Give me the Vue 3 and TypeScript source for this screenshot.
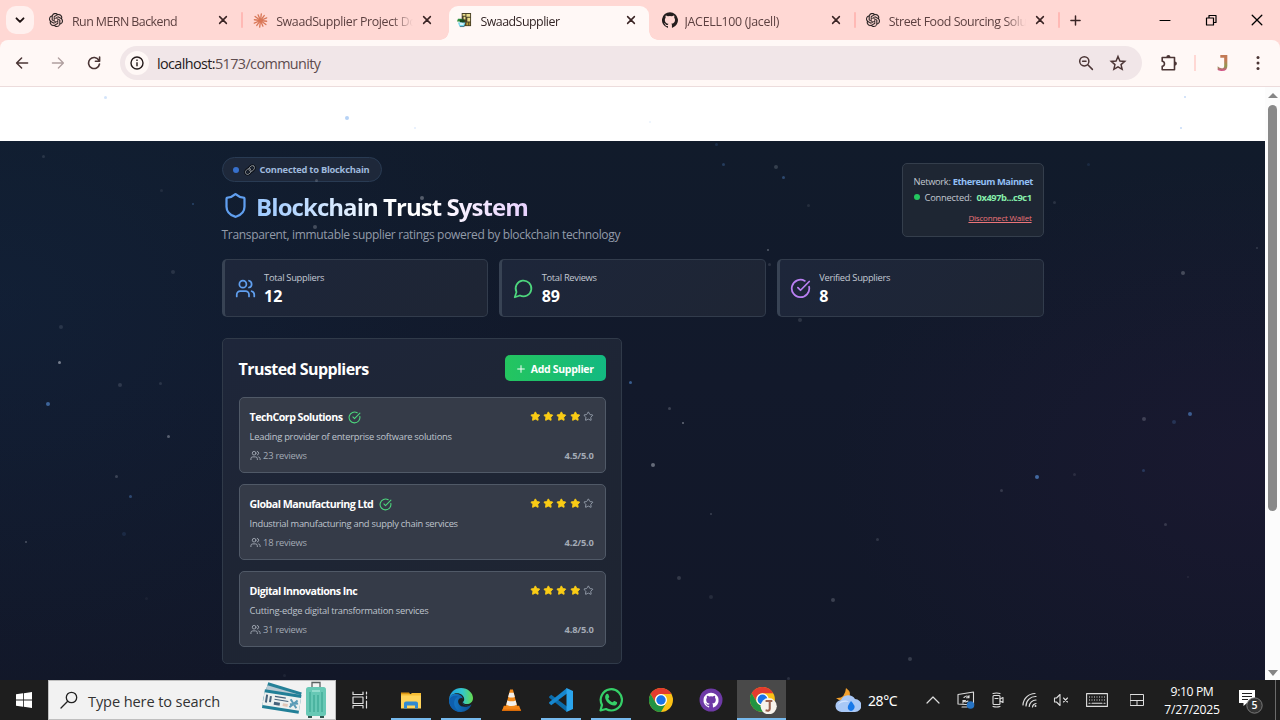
<script setup lang="ts">
import { h, type FunctionalComponent } from 'vue'

const openai =
  '<path fill="#241e1e" stroke="#241e1e" stroke-width=".3" d="M22.2819 9.8211a5.9847 5.9847 0 0 0-.5157-4.9108 6.0462 6.0462 0 0 0-6.5098-2.9A6.0651 6.0651 0 0 0 4.9807 4.1818a5.9847 5.9847 0 0 0-3.9977 2.9 6.0462 6.0462 0 0 0 .7427 7.0966 5.98 5.98 0 0 0 .511 4.9107 6.051 6.051 0 0 0 6.5146 2.9001A5.9847 5.9847 0 0 0 13.2599 24a6.0557 6.0557 0 0 0 5.7718-4.2058 5.9894 5.9894 0 0 0 3.9977-2.9001 6.0557 6.0557 0 0 0-.7475-7.0729zm-9.022 12.6081a4.4755 4.4755 0 0 1-2.8764-1.0408l.1419-.0804 4.7783-2.7582a.7948.7948 0 0 0 .3927-.6813v-6.7369l2.02 1.1686a.071.071 0 0 1 .038.052v5.5826a4.504 4.504 0 0 1-4.4945 4.4944zm-9.6607-4.1254a4.4708 4.4708 0 0 1-.5346-3.0137l.142.0852 4.783 2.7582a.7712.7712 0 0 0 .7806 0l5.8428-3.3685v2.3324a.0804.0804 0 0 1-.0332.0615L9.74 19.9502a4.4992 4.4992 0 0 1-6.1408-1.6464zM2.3408 7.8956a4.485 4.485 0 0 1 2.3655-1.9728V11.6a.7664.7664 0 0 0 .3879.6765l5.8144 3.3543-2.0201 1.1685a.0757.0757 0 0 1-.071 0l-4.8303-2.7865A4.504 4.504 0 0 1 2.3408 7.872zm16.5963 3.8558L13.1038 8.364 15.1192 7.2a.0757.0757 0 0 1 .071 0l4.8303 2.7913a4.4944 4.4944 0 0 1-.6765 8.1042v-5.6772a.79.79 0 0 0-.407-.667zm2.0107-3.0231l-.142-.0852-4.7735-2.7818a.7759.7759 0 0 0-.7854 0L9.409 9.2297V6.8974a.0662.0662 0 0 1 .0284-.0615l4.8303-2.7866a4.4992 4.4992 0 0 1 6.6802 4.66zM8.3065 12.863l-2.02-1.1638a.0804.0804 0 0 1-.038-.0567V6.0742a4.4992 4.4992 0 0 1 7.3757-3.4537l-.142.0805L8.704 5.459a.7948.7948 0 0 0-.3927.6813zm1.0976-2.3654l2.602-1.4998 2.6069 1.4998v2.9994l-2.5974 1.4997-2.6067-1.4997Z"/>'
const octocat =
  'M12 .3a12 12 0 0 0-3.8 23.4c.6.1.8-.3.8-.6v-2c-3.3.7-4-1.6-4-1.6-.6-1.4-1.4-1.8-1.4-1.8-1-.7.1-.7.1-.7 1.2.1 1.8 1.2 1.8 1.2 1 1.8 2.8 1.3 3.5 1 .1-.8.4-1.3.7-1.6-2.6-.3-5.4-1.3-5.4-6 0-1.2.4-2.3 1.2-3.1-.1-.4-.5-1.6.1-3.2 0 0 1-.3 3.3 1.2a11.500 11.500 0 0 1 6 0C17.200 5 18.200 5.300 18.200 5.300c.6 1.600.2 2.800.1 3.200.8.8 1.200 1.900 1.200 3.200 0 4.600-2.800 5.600-5.500 5.900.5.4.9 1 .9 2.200v3.300c0 .3.1.7.8.6A12 12 0 0 0 12 .3'
const chrome =
  '<circle cx="12" cy="12" r="12" fill="#fbc116"/><path fill="#e33b2e" d="M1.600 6A12 12 0 0 1 22.400 6H12a6 6 0 0 0-5.200 9z"/><path fill="#229342" d="M1.600 6A12 12 0 0 0 12 24l5.200-9a6 6 0 0 1-10.400 0z"/><circle cx="12" cy="12" r="6" fill="#fff"/><circle cx="12" cy="12" r="4.700" fill="#1a73e8"/>'

const rays = Array.from({ length: 12 }, (_, i) => {
  const a = (i * Math.PI) / 6 + 0.12
  const r = i % 2 ? 7.2 : 6.6
  return `<path d="M8 8 ${(8 + Math.cos(a) * r).toFixed(2)} ${(8 + Math.sin(a) * r).toFixed(2)}"/>`
}).join('')

type Art = { box: string; body: string; line?: number }

const art: Record<string, Art> = {
  openai: { box: '0 0 24 24', body: openai },
  claude: { box: '0 0 16 16', body: `<g stroke="#d97757" stroke-width="1.400" stroke-linecap="round">${rays}</g>` },
  swaad: {
    box: '0 0 16 16',
    body: '<path fill="#4a4228" d="M5 0h10v14H5z"/><path fill="#e9dc8b" d="M6 1h3v2H6zM10 1h4v3h-4zM7 4h2v3H7zM11 5h3v4h-3z"/><path fill="#b99a35" d="M10 10h2v3h-2zM13 10h1v3h-1z"/><path fill="#2f8f3d" d="M1 6h4l2 3H0z"/><path fill="#17491f" d="M3 7h5v3H3z"/><path fill="#70d6ea" d="M1 10h8l-1.500 4h-5z"/><path fill="#fff" d="M3 11h4v1.500H3z"/><path fill="#3e7183" d="M3 14h5v1H3z"/>',
  },
  github: { box: '0 0 24 24', body: `<path fill="#241e1e" d="${octocat}"/>` },
  close: { box: '0 0 10 10', line: 1.5, body: '<path d="m1.600 1.600 6.800 6.800m0-6.800L1.600 8.400"/>' },
  chevron: { box: '0 0 10 10', line: 1.9, body: '<path d="m1.500 3.300 3.500 3.500 3.500-3.500"/>' },
  add: { box: '0 0 12 12', line: 1.6, body: '<path d="M6 1v10M1 6h10"/>' },
  minimise: { box: '0 0 12 12', line: 1.1, body: '<path d="M1 6.500h10"/>' },
  restore: { box: '0 0 12 12', line: 1.2, body: '<path d="M1.500 4h7v7h-7zM4 4V1.500h7V8.500H8.500"/>' },
  exit: { box: '0 0 12 12', line: 1.3, body: '<path d="m1.200 1.200 9.600 9.600m0-9.600-9.600 9.600"/>' },
  back: { box: '0 0 14 14', line: 1.5, body: '<path d="M12.600 7H1.800M6.600 2 1.600 7l5 5"/>' },
  forward: { box: '0 0 14 14', line: 1.3, body: '<path d="M1.400 7h10.800M7.400 2l5 5-5 5"/>' },
  reload: { box: '0 0 14 14', line: 1.6, body: '<path d="M11.800 4.200A5.500 5.500 0 1 0 12.500 8M12.600 1v4.200H8.400"/>' },
  info: { box: '0 0 16 16', line: 1.4, body: '<circle cx="8" cy="8" r="6"/><path stroke-linecap="butt" d="M8 7.200v4M8 4.600V6"/>' },
  zoomOut: { box: '0 0 16 16', line: 1.5, body: '<circle cx="6.300" cy="6.300" r="4.600"/><path d="m9.800 9.800 4.600 4.600M4.600 6.300h3.400"/>' },
  bookmark: { box: '0 0 16 16', line: 1.3, body: '<path stroke-linejoin="miter" d="m8 2.200 1.700 4 4.300.4-3.300 2.800 1 4.200L8 11.400l-3.700 2.200 1-4.200L2 6.600l4.300-.4z"/>' },
  puzzle: { box: '0 0 18 18', line: 1.6, body: '<path d="M2.200 3.500h12.300v12.300H2.200v-3.600c3-.4 3-4.600 0-5z"/><path fill="currentColor" stroke="none" d="M6.300 3.200a2.100 2.100 0 0 1 4.200 0zM14.800 7.500a2.100 2.100 0 0 1 0 4.200z"/>' },
  dots: { box: '0 0 4 16', body: '<circle cx="2" cy="2.500" r="1.500" fill="currentColor"/><circle cx="2" cy="8" r="1.500" fill="currentColor"/><circle cx="2" cy="13.500" r="1.500" fill="currentColor"/>' },
  link: { box: '0 0 12 12', line: 1, body: '<g stroke="#0a0d14" stroke-width="2.400"><ellipse cx="4.300" cy="7.500" rx="3.300" ry="2.400" transform="rotate(-48 4.300 7.500)"/><ellipse cx="7.700" cy="4.500" rx="3.300" ry="2.400" transform="rotate(-48 7.700 4.500)"/></g><g stroke="#858b92" stroke-width=".9"><ellipse cx="4.300" cy="7.500" rx="3.300" ry="2.400" transform="rotate(-48 4.300 7.500)"/><ellipse cx="7.700" cy="4.500" rx="3.300" ry="2.400" transform="rotate(-48 7.700 4.500)"/></g>' },
  shield: { box: '0 0 24 24', line: 2, body: '<path d="M20 13c0 5-3.500 7.500-7.660 8.950a1 1 0 0 1-.67-.01C7.500 20.500 4 18 4 13V6a1 1 0 0 1 1-1c2 0 4.500-1.200 6.240-2.720a1.170 1.170 0 0 1 1.520 0C14.510 3.810 17 5 19 5a1 1 0 0 1 1 1z"/>' },
  users: { box: '0 0 24 24', line: 2, body: '<path d="M16 21v-2a4 4 0 0 0-4-4H6a4 4 0 0 0-4 4v2"/><circle cx="9" cy="7" r="4"/><path d="M22 21v-2a4 4 0 0 0-3-3.870M16 3.130a4 4 0 0 1 0 7.750"/>' },
  message: { box: '0 0 24 24', line: 2, body: '<path d="M7.900 20A9 9 0 1 0 4 16.100L2 22Z"/>' },
  check: { box: '0 0 24 24', line: 2, body: '<path d="M21.801 10A10 10 0 1 1 17 3.335"/><path d="m9 11 3 3L22 4"/>' },
  plus: { box: '0 0 24 24', line: 2.3, body: '<path d="M4 12h16M12 4v16"/>' },
  star: { box: '0 0 24 24', line: 2, body: '<path d="M11.525 2.295a.53.53 0 0 1 .95 0l2.310 4.679a2.120 2.120 0 0 0 1.595 1.160l5.166.756a.53.53 0 0 1 .294.904l-3.736 3.638a2.120 2.120 0 0 0-.611 1.878l.882 5.140a.53.53 0 0 1-.771.560l-4.618-2.428a2.120 2.120 0 0 0-1.973 0L6.396 21.010a.53.53 0 0 1-.770-.560l.881-5.139a2.120 2.120 0 0 0-.611-1.879L2.160 9.795a.53.53 0 0 1 .294-.906l5.165-.755a2.120 2.120 0 0 0 1.597-1.160z"/>' },
  windows: { box: '0 0 16 16', body: '<path fill="#fff" d="M0 2.300 7 1.300v6.300H0zM7.800 1.200 16 0v7.600H7.800zM0 8.400h7v6.300l-7-1zM7.800 8.400H16V16l-8.200-1.200z"/>' },
  search: { box: '0 0 18 18', line: 1.3, body: '<circle cx="11.500" cy="6.500" r="5.200"/><path d="M7.700 10.300 1 17"/>' },
  travel: {
    box: '0 0 66 38',
    body: '<g transform="rotate(17 20 18)"><path fill="#258198" d="M2 6h35v19H2z"/><path fill="#b9c9d2" d="M2 9h35v14H2z"/></g><g transform="rotate(9 20 22)"><path fill="#217f97" d="M1 11h37v19H1z"/><path fill="#edf0ef" d="M1 14h37v13H1z"/><path fill="#46627b" d="M3 16h2v8H3zM7 17h2v6H7zM12 16h11v1.200H12zM12 19h14v1H12zM12 22h6v3h-6z"/><path fill="#e2c7b8" d="M21 22h5v3h-5z"/><path stroke="#5b9bb6" stroke-width="2" d="m28 17 7 8m0-8-7 8m0-3 8-2"/></g><path fill="none" stroke="#596061" stroke-width="1.300" d="M50 7V1.500h8V7"/><rect x="44" y="6" width="20" height="29" rx="2.500" fill="#67c8b5"/><path stroke="#3ba793" stroke-width="1.200" d="M48 11v20M52 14v17M56 14v17M60 11v20"/><path fill="#92dccd" d="M50 9h8v2h-8z"/><path fill="#31564f" d="M46 35h4v2h-4zM58 35h4v2h-4z"/>',
  },
  taskView: { box: '0 0 18 18', line: 1.2, body: '<path d="M2 1v2.500h10V1M2 6h10v6.500H2zM2 17v-2.500h10V17M15.500 1v2M15.500 5v2.500M15.500 10v7"/>' },
  explorer: { box: '0 0 22 18', body: '<path fill="#d99411" d="M1 1h8l2 2.500H1z"/><path fill="#ffd45b" d="M1 3h20v14H1z"/><path fill="#f6bd34" d="M1 3h9l2-1.500h9V4H1z"/><path fill="#318ad2" d="M4 17v-5a2 2 0 0 1 2-2h10a2 2 0 0 1 2 2v5h-3v-3H7v3z"/>' },
  edge: {
    box: '0 0 24 24',
    body: '<defs><linearGradient id="edge-top" x1="0" x2="1"><stop stop-color="#1d9fe1"/><stop offset=".55" stop-color="#32c5cf"/><stop offset="1" stop-color="#66dc4e"/></linearGradient><linearGradient id="edge-low" x1="0" x2="1"><stop stop-color="#1780d2"/><stop offset="1" stop-color="#0a4d91"/></linearGradient></defs><path fill="url(#edge-low)" d="M0 12C0 7 4 5.500 8 6c5 .6 6.500 4 5.500 6-1 1.800 1 5.600 5 5.600 2 0 3.300-.7 4-1C20.500 21.500 16.500 24 12 24 5 24 0 18.600 0 12"/><path fill="#0e5fae" d="M9 8.500c-3.500 2-4.500 5.500-3.500 9 1 3.300 3.800 6.500 7.500 6.500-5 .4-12.500-3-12.900-11C.2 9 5 6.500 9 8.500"/><path fill="url(#edge-top)" d="M.1 11C.7 4.500 5.800 0 12 0c7 0 12 5 12 10 0 4-3 6-6 6-2.500 0-4-1-4-1.800 0-.6 1.200-1 1.200-3C15.200 8 12 5.300 8 5.300 4 5.300 1 7.500.1 11"/><path fill="#1e1e1e" d="M9.300 12.200c.7-2 3-2.700 4.400-1.800.8 1.200.3 2.700-.2 3.500-.3 2.200 2.400 4 5.400 3.500 1-.1 2.400-.8 3.100-.7-2.500 2.200-10 3.500-12.100-.7-.8-1.400-.9-2.800-.6-3.800"/>',
  },
  vlc: { box: '0 0 22 24', body: '<path fill="#f58314" d="M3 18h16l2 5.500H1z"/><path fill="#d96b08" d="M1 22h20v1.500H1z"/><path fill="#f28a1c" d="M9.500 1h3L17 19q-6 3-12 0z"/><path fill="#f3f1ed" d="m8.700 4.500-1.200 4.300q3.500 1.300 7 0l-1.200-4.300zM6.600 12.500 5.500 17q5.500 2.600 11 0l-1.100-4.500q-4.400 1.800-8.800 0"/>' },
  vscode: { box: '0 0 24 24', body: '<path fill="#0b6cab" d="M0 8.800 2.300 6.700 18 18.500V24L.2 9.800z"/><path fill="#1687cf" d="M0 15.200 2.300 17.300 18 5.500V0L.2 14.200z"/><path fill="#2ba5ed" d="m17.500 0 6.500 2.900v18.200L17.500 24z"/>' },
  whatsapp: { box: '0 0 24 24', body: '<path fill="none" stroke="#35cf68" stroke-width="2.200" stroke-linejoin="round" d="m1.500 22.500 1.500-5.600A10.600 10.600 0 1 1 7 21z"/><path fill="#35cf68" d="M7.200 6.300c1-.8 1.900-.5 2.200.2l.8 1.900c.4 1-.7 1.500-.9 2 .5 1.600 2.700 3.400 4.300 3.900.7-.4 1.100-1.600 1.900-1.300l2.200 1.100c1 .6.2 2.200-.6 2.800-2 1.600-5.600.2-7.800-1.800C7 13.100 4.800 9 7.200 6.300"/>' },
  chrome: { box: '0 0 24 24', body: chrome },
  desktop: { box: '0 0 24 24', body: `<circle cx="12" cy="12" r="11.500" fill="#6e3aa6"/><g transform="translate(4.500 4.500) scale(.63)"><path fill="#fff" d="${octocat}"/></g>` },
  profile: { box: '0 0 26 26', body: `${chrome}<circle cx="18" cy="18.500" r="7.800" fill="#f7f3ed"/><path fill="none" stroke="#9b6250" stroke-width="2" d="M15 13.500h6.500M19 13.500v7.500q0 2.500-4 1.500"/>` },
  weather: { box: '0 0 26 26', body: '<path fill="#f2a12e" d="M11 1q7 5 2 11-5 5-12-1 9 1 10-10"/><path fill="#a9c8f6" d="M7 25a6 6 0 0 1-1-12 8 8 0 0 1 14-1 6.500 6.500 0 0 1 0 13z"/><path fill="#d3e4ff" d="M3 18a7 7 0 0 1 11-3q-7-1-11 3"/><path fill="#1878e8" d="M16 14q5 5 3 8-3 4-6 0-1-3 3-8"/>' },
  up: { box: '0 0 14 14', line: 1.2, body: '<path d="m1 10 6-6 6 6"/>' },
  screen: { box: '0 0 18 18', line: 1.1, body: '<path d="M1 3.500 16.500 1v13L1 13zM5 16h5M7 6.500q3-3 5 0M12 4.500v2.300H9.500M11 10q-3 2-5-.5M6 12V9.500h2.500"/><circle cx="13.500" cy="14" r="3.800" fill="#2774c4" stroke="none"/>' },
  camera: { box: '0 0 16 16', line: 1.1, body: '<rect x="3" y="3.500" width="7" height="9" rx="1"/><path d="m10 7 3-1.500v5L10 9M3 1.500q3.500-1 7 0M3 14.500q3.500 1 7 0M5 6.500h3"/>' },
  wifi: { box: '0 0 16 16', line: 1.2, body: '<path d="M1 13A12 12 0 0 1 13 1.500M4 14A9.500 9.500 0 0 1 14 4.500M7.200 14.500A7 7 0 0 1 14 8M10.500 15a4 4 0 0 1 3.500-3.500"/><circle cx="13.500" cy="14" r="1" fill="currentColor" stroke="none"/>' },
  mute: { box: '0 0 16 16', line: 1.1, body: '<path d="M1.500 6h2L7 2.500v11L3.500 10h-2zM10.500 6l4 4m0-4-4 4"/>' },
  keyboard: { box: '0 0 22 14', line: 1.1, body: '<path d="M.6.600h20.800v12.800H.6z"/><path stroke-dasharray="1 1.500" stroke-linecap="butt" d="M3 4h16M3 7h16"/><path d="M6 10.300h10M3 10.300h1M18 10.300h1"/>' },
  touchpad: { box: '0 0 14 12', line: 1, body: '<path d="M.5.500h13v11H.5zM.5 6.500h13M7 6.500v5"/>' },
  notes: { box: '0 0 26 26', body: '<path fill="#fff" d="M1 2h16v13H9l-3.500 3v-3H1z"/><path stroke="#222" d="M4 5.500h10M4 8.500h10M4 11.500h6"/><circle cx="16.500" cy="17.500" r="7.700" fill="#343434" stroke="#8b8b8b" stroke-width=".8"/>' },
}

const Glyph: FunctionalComponent<{ name: string }> = (props) => {
  const item = art[props.name]
  const line = item.line
    ? { stroke: 'currentColor', 'stroke-width': item.line, 'stroke-linejoin': 'round', 'stroke-linecap': 'round' }
    : {}
  return h('svg', { viewBox: item.box, fill: 'none', 'aria-hidden': 'true', innerHTML: item.body, ...line })
}
Glyph.props = ['name']

const tabs = [
  { icon: 'openai', title: 'Run MERN Backend', fit: 'fit-a' },
  { icon: 'claude', title: 'SwaadSupplier Project Do', fit: 'fit-b' },
  { icon: 'swaad', title: 'SwaadSupplier', fit: 'fit-c', active: true },
  { icon: 'github', title: 'JACELL100 (Jacell)', fit: 'fit-d' },
  { icon: 'openai', title: 'Street Food Sourcing Solu', fit: 'fit-e' },
]

const stats = [
  { icon: 'users', tone: 'blue', label: 'Total Suppliers', value: 12 },
  { icon: 'message', tone: 'green', label: 'Total Reviews', value: 89 },
  { icon: 'check', tone: 'purple', label: 'Verified Suppliers', value: 8 },
]

const suppliers = [
  { name: 'TechCorp Solutions', verified: true, about: 'Leading provider of enterprise software solutions', reviews: 23, rating: '4.5' },
  { name: 'Global Manufacturing Ltd', verified: true, about: 'Industrial manufacturing and supply chain services', reviews: 18, rating: '4.2' },
  { name: 'Digital Innovations Inc', verified: false, about: 'Cutting-edge digital transformation services', reviews: 31, rating: '4.8' },
]

const apps = [
  { icon: 'explorer', open: true },
  { icon: 'edge', open: true },
  { icon: 'vlc' },
  { icon: 'vscode', open: true },
  { icon: 'whatsapp', open: true },
  { icon: 'chrome' },
  { icon: 'desktop' },
  { icon: 'profile', open: true, current: true },
]

// x, y, diameter, opacity, blue
const particles: [number, number, number, number, boolean][] = [
  [105, 97, 3, 0.3, true], [347, 118, 4, 0.5, true], [415, 128, 2, 0.2, false], [650, 122, 2, 0.15, false],
  [1185, 97, 2, 0.4, true], [1181, 128, 2, 0.4, true],
  [43, 156, 3, 0.15, false], [161, 190, 3, 0.1, false], [193, 204, 2, 0.3, true], [173, 272, 4, 0.14, false],
  [61, 327, 4, 0.15, false], [59, 362, 3, 0.6, false], [120, 385, 4, 0.18, false], [160, 383, 3, 0.15, false],
  [48, 404, 4, 0.55, true], [168, 436, 3, 0.42, false], [116, 476, 3, 0.25, false], [130, 496, 3, 0.35, true],
  [124, 534, 4, 0.12, true], [26, 542, 2, 0.35, false], [146, 598, 3, 0.06, false], [284, 675, 3, 0.08, false],
  [316, 180, 3, 0.25, false], [422, 198, 4, 0.4, false], [315, 227, 4, 0.3, false],
  [716, 144, 3, 0.15, true], [723, 164, 3, 0.25, true], [776, 167, 4, 0.22, false], [783, 177, 3, 0.35, true],
  [808, 205, 3, 0.12, false], [768, 250, 2, 0.4, false], [769, 264, 3, 0.16, false], [800, 320, 4, 0.17, false],
  [1054, 202, 3, 0.15, false], [1088, 164, 3, 0.12, true], [1257, 248, 2, 0.2, false], [1183, 273, 4, 0.3, false],
  [630.5, 382.5, 3.5, 0.5, true], [669, 408, 3, 0.25, false], [683, 423, 2, 0.5, false], [653, 465, 4, 0.5, false],
  [711, 514, 2, 0.25, false], [877, 539, 3, 0.18, false], [679, 578, 4, 0.2, false], [711, 597, 4, 0.12, false],
  [833, 600, 4, 0.25, false], [910, 659, 4, 0.22, false], [1001, 490, 3, 0.2, false], [1037, 477, 4, 0.6, true],
  [1074, 474, 3, 0.13, false], [1143, 470, 3, 0.24, true], [1144, 419, 4, 0.25, false], [1174, 422, 4, 0.2, true],
  [1190, 413.5, 4, 0.5, true], [1165, 524, 3, 0.2, false], [1188, 577, 2, 0.1, false], [788, 678, 3, 0.15, false],
]
</script>

<template>
  <div class="screen">
    <div class="tabstrip">
      <div class="tab-search"><Glyph name="chevron" class="i10" /></div>
      <div v-for="tab in tabs" :key="tab.title" class="tab" :class="{ active: tab.active }">
        <Glyph :name="tab.icon" class="favicon" :class="tab.icon" />
        <span class="tab-title"><span :class="tab.fit">{{ tab.title }}</span></span>
        <Glyph name="close" class="i10 tab-close" />
      </div>
      <Glyph name="add" class="new-tab" />
      <div class="window-buttons">
        <Glyph name="minimise" class="i12" />
        <Glyph name="restore" class="i12" />
        <Glyph name="exit" class="i12" />
      </div>
    </div>

    <div class="toolbar">
      <Glyph name="back" class="i14" />
      <Glyph name="forward" class="i14 dim" />
      <Glyph name="reload" class="i14" />
      <div class="address">
        <span class="site-info"><Glyph name="info" class="i16" /></span>
        <span class="url"><b>localhost:</b>5173/community</span>
        <Glyph name="zoomOut" class="i16" />
        <Glyph name="bookmark" class="i18 bookmark" />
      </div>
      <Glyph name="puzzle" class="i18" />
      <span class="rule"></span>
      <span class="avatar">J</span>
      <Glyph name="dots" class="dots" />
    </div>

    <div class="viewport">
      <main class="page">
        <div class="content">
          <header class="hero">
            <div>
              <div class="badge">
                <span class="dot blue-dot"></span>
                <Glyph name="link" class="link-icon" />
                <span class="badge-text">Connected to Blockchain</span>
              </div>
              <div class="title-row">
                <Glyph name="shield" class="shield" />
                <h1>Blockchain Trust System</h1>
              </div>
              <p class="tagline">Transparent, immutable supplier ratings powered by blockchain technology</p>
            </div>
            <aside class="wallet">
              <div class="network">Network: <b>Ethereum Mainnet</b></div>
              <div class="account"><span class="dot green-dot"></span><span>Connected:</span><b>0x497b...c9c1</b></div>
              <a class="disconnect">Disconnect Wallet</a>
            </aside>
          </header>

          <section class="stats">
            <article v-for="stat in stats" :key="stat.label" class="stat">
              <Glyph :name="stat.icon" class="stat-icon" :class="stat.tone" />
              <div>
                <div class="stat-label">{{ stat.label }}</div>
                <div class="stat-value">{{ stat.value }}</div>
              </div>
            </article>
          </section>

          <section class="panel">
            <div class="panel-head">
              <h2>Trusted Suppliers</h2>
              <button class="add"><Glyph name="plus" class="add-icon" /><span>Add Supplier</span></button>
            </div>
            <article v-for="s in suppliers" :key="s.name" class="supplier">
              <div class="row name-row">
                <h3>{{ s.name }}</h3>
                <Glyph v-if="s.verified" name="check" class="verified" />
                <span class="stars">
                  <Glyph v-for="n in 5" :key="n" name="star" class="star" :class="{ lit: n < 5 }" />
                </span>
              </div>
              <p class="about">{{ s.about }}</p>
              <div class="row meta">
                <Glyph name="users" class="meta-icon" />
                <span>{{ s.reviews }} reviews</span>
                <b>{{ s.rating }}/5.0</b>
              </div>
            </article>
          </section>
        </div>
      </main>
      <div class="scrollbar">
        <span class="arrow-up"></span>
        <span class="thumb"></span>
        <span class="arrow-down"></span>
      </div>
    </div>

    <i
      v-for="(p, i) in particles"
      :key="i"
      class="particle"
      :class="{ azure: p[4], onlight: p[1] < 141 }"
      :style="{ left: p[0] - p[2] / 2 + 'px', top: p[1] - p[2] / 2 + 'px', width: p[2] + 'px', height: p[2] + 'px', opacity: p[3] }"
    ></i>

    <footer class="taskbar">
      <div class="start"><Glyph name="windows" class="i16" /></div>
      <div class="search">
        <Glyph name="search" class="i18" />
        <span>Type here to search</span>
        <Glyph name="travel" class="travel" />
      </div>
      <div class="task-view"><Glyph name="taskView" class="i18" /></div>
      <div v-for="app in apps" :key="app.icon" class="app" :class="[app.icon, { open: app.open, current: app.current }]">
        <Glyph :name="app.icon" class="app-icon" />
      </div>
      <div class="tray">
        <Glyph name="weather" class="weather" />
        <span class="temp">28°C</span>
        <Glyph name="up" class="t-up" />
        <Glyph name="screen" class="t-screen" />
        <Glyph name="camera" class="t-camera" />
        <Glyph name="wifi" class="t-wifi" />
        <Glyph name="mute" class="t-mute" />
        <Glyph name="keyboard" class="t-keyboard" />
        <Glyph name="touchpad" class="t-touchpad" />
        <div class="clock"><span>9:10 PM</span><span class="date">7/27/2025</span></div>
        <div class="notes"><Glyph name="notes" class="notes-icon" /><span class="count">5</span></div>
        <span class="peek"></span>
      </div>
    </footer>
  </div>
</template>

<style>
body { margin: 0; overflow: hidden; }
</style>

<style scoped>
* { box-sizing: border-box; }
svg { flex: none; display: block; }
h1, h2, h3, p { margin: 0; }
.screen { position: relative; display: flex; flex-direction: column; width: 1280px; height: 720px; overflow: hidden; font-family: "Open Sans", "Noto Sans", sans-serif; background: #fff; white-space: nowrap; }
.i10 { width: 10px; height: 10px; }
.i12 { width: 12px; height: 12px; }
.i14 { width: 14px; height: 14px; }
.i16 { width: 16px; height: 16px; }
.i18 { width: 18px; height: 18px; }

.tabstrip { display: flex; align-items: center; height: 40px; padding-left: 6px; background: #ffd8d4; box-shadow: 0 8px 0 #ffd8d4; color: #3a2424; }
.tab-search { display: grid; place-items: center; width: 28px; height: 28px; margin-right: 6px; border-radius: 10px; background: #fff0ee; color: #1d1111; }
.tab { position: relative; display: flex; align-items: center; width: 204.200px; height: 40px; padding-left: 9px; }
.tab::after { content: ""; position: absolute; right: 1px; top: 12px; width: 2px; height: 16px; border-radius: 1px; background: #ffb9b5; }
.tab:has(+ .active)::after { display: none; }
.favicon { width: 15px; height: 15px; z-index: 1; }
.favicon.openai { width: 14px; height: 14px; margin-right: 1px; }
.favicon.github { width: 16px; height: 16px; margin-right: -1px; }
.tab-title { width: 139px; margin-left: 8px; overflow: hidden; font-size: 12.400px; line-height: 20px; padding-top: 3px; color: #5d4141; z-index: 1; -webkit-mask-image: linear-gradient(90deg, #000 116px, transparent 137px); mask-image: linear-gradient(90deg, #000 116px, transparent 137px); }
.tab.active .tab-title { color: #332525; }
.fit-a { letter-spacing: -.55px; }
.fit-b { letter-spacing: -.36px; }
.fit-c { letter-spacing: -.5px; }
.fit-d { letter-spacing: -.3px; }
.fit-e { letter-spacing: -.42px; }
.tab-close { margin-left: 7px; z-index: 1; }
.tab.active::before { content: ""; position: absolute; left: 1px; right: 4px; top: 6px; bottom: 0; border-radius: 9px 9px 0 0; background: #fff8f6; }
.tab.active::after { left: -8px; right: -5px; top: auto; bottom: 0; width: auto; height: 9px; border-radius: 0; background: radial-gradient(circle at 0 0, transparent 8.500px, #fff8f6 9px) left / 9px 9px no-repeat, radial-gradient(circle at 100% 0, transparent 8.500px, #fff8f6 9px) right / 9px 9px no-repeat; }
.new-tab { width: 11px; height: 11px; margin-left: 9px; }
.window-buttons { display: flex; gap: 34px; margin-left: auto; margin-right: 17px; color: #000; }

.toolbar { display: flex; align-items: center; height: 47px; padding: 0 20px 0 15px; border-bottom: 1px solid #ecdcdc; border-radius: 8px 8px 0 0; background: #fff8f6; color: #4b3535; z-index: 1; }
.toolbar > .dim { margin: 0 22px; color: #b09f9f; }
.address { display: flex; align-items: center; width: 1022px; height: 34px; margin-left: 19px; padding: 0 15px 0 5px; border-radius: 17px; background: #f1e6e8; }
.site-info { display: grid; place-items: center; width: 24px; height: 24px; border-radius: 50%; background: #fff8f6; color: #241a1a; }
.url { flex: 1; margin-left: 8px; font-size: 14.400px; letter-spacing: -.610px; color: #5e4c4e; }
.url b { font-weight: 400; color: #251a1b; }
.bookmark { margin-left: 15px; }
.address + .i18 { margin-left: 18px; }
.rule { width: 2px; height: 16px; margin: 0 17px 0 16px; background: #ffd8d4; }
.avatar { width: 20px; height: 24px; margin-top: 1px; background: linear-gradient(180deg, #c27a55 0 35%, #8f9a50 60%, #dc4a90 80%); background-clip: text; -webkit-background-clip: text; color: transparent; font-family: "DejaVu Sans Mono", monospace; font-size: 22px; font-weight: 700; line-height: 24px; text-align: center; }
.dots { width: 4px; height: 16px; margin-left: auto; }

.viewport { display: flex; height: 593px; }
.page { width: 1265px; height: 539px; margin-top: 54px; background: radial-gradient(ellipse 420px 300px at 1250px 320px, rgba(42, 24, 60, .3), transparent), radial-gradient(ellipse 520px 420px at 0 160px, rgba(17, 44, 76, .3), transparent), linear-gradient(180deg, #111b2b, #12192b 45%, #121728); }
.content { width: 822px; margin-left: 221.600px; padding-top: 16px; }
.hero { display: flex; justify-content: space-between; height: 102px; }
.dot { width: 6px; height: 6px; border-radius: 50%; }
.badge { display: flex; align-items: center; width: 160px; height: 25px; padding-left: 10px; border: 1px solid #293b53; border-radius: 13px; background: #1e283a; }
.blue-dot { background: #3770cb; }
.link-icon { width: 12px; height: 12px; margin-left: 5.500px; }
.badge-text { margin-left: 3.500px; font-size: 9.330px; font-weight: 700; letter-spacing: -.240px; color: #9fb9dc; }
.title-row { display: flex; align-items: center; height: 32px; margin-top: 9px; }
.shield { width: 27px; height: 27px; margin-top: -3px; color: #609fef; }
h1 { margin-left: 7.500px; font-size: 24px; line-height: 32px; letter-spacing: -.950px; font-weight: 700; color: transparent; background: linear-gradient(90deg, #9bc8ff, #fff 50% 62%, #e8d2fe); background-clip: text; -webkit-background-clip: text; }
.tagline { margin-top: 4px; font-size: 12px; line-height: 16px; letter-spacing: -.330px; color: #939ba9; }
.wallet { display: flex; flex-direction: column; width: 142px; height: 74px; margin-top: 6px; padding: 11px 11px 0; border: 1px solid #343e4c; border-radius: 5px; background: #1e2633; font-size: 9.330px; text-align: right; color: #c2c8d1; }
.network { height: 13px; line-height: 13px; letter-spacing: -.330px; }
.network b { font-weight: 700; letter-spacing: -.450px; color: #91bff4; }
.account { display: flex; align-items: center; height: 14px; margin-top: 2px; }
.account > span + span { margin-left: 5px; letter-spacing: -.230px; }
.account b { margin-left: auto; font-weight: 700; letter-spacing: -.450px; color: #85edaa; }
.green-dot { background: #24c65f; }
.disconnect { margin-top: 7px; font-size: 8px; line-height: 13px; letter-spacing: -.200px; color: #eb7479; text-decoration: underline; }

.stats { display: grid; grid-template-columns: repeat(3, 1fr); gap: 10.670px; }
.stat { display: flex; align-items: center; height: 58px; padding-left: 10.500px; border: 1px solid #323c4c; border-left: 3px solid #384354; border-radius: 5px; background: linear-gradient(135deg, #1d263a, #1e2534); }
.stat-icon { width: 21px; height: 21px; }
.blue { color: #609fef; }
.green { color: #4dd67d; }
.purple { color: #b97ff2; }
.stat > div { margin-left: 8px; }
.stat-label { font-size: 9.330px; line-height: 13px; letter-spacing: -.300px; color: #c3c9d3; }
.stat-value { font-size: 16px; font-weight: 700; line-height: 20px; margin-top: 2px; letter-spacing: -.1px; color: #fff; }
.panel { display: flex; flex-direction: column; gap: 11px; width: 400.600px; height: 326px; margin-top: 21px; padding: 16px 15.500px 16px 16px; border: 1px solid #303a49; border-radius: 5px; background: linear-gradient(155deg, #1e263a, #1e2534 50%, #1e2431); }
.panel-head { display: flex; align-items: center; justify-content: space-between; height: 26px; margin-bottom: 5px; }
h2 { margin-top: 1px; font-size: 16px; line-height: 24px; font-weight: 700; letter-spacing: -.570px; color: #fff; }
.add { display: flex; align-items: center; width: 101px; height: 26px; padding: 1px 0 0 11px; border: 0; border-radius: 5px; background: linear-gradient(90deg, #24c55f, #13b981); color: #fff; font: 700 10.500px "Open Sans", sans-serif; letter-spacing: -.3px; }
.add-icon { width: 10px; height: 10px; margin-right: 5px; }
.supplier { height: 76px; padding: 10px 11px 0 10px; border: 1px solid #505967; border-radius: 5px; background: #353b48; }
.row { display: flex; align-items: center; }
.name-row { height: 18px; }
h3 { font-size: 10.670px; font-weight: 700; letter-spacing: -.520px; color: #fff; }
.verified { width: 13px; height: 13px; margin-left: 5.800px; color: #4dd67d; }
.stars { display: flex; gap: 2.700px; margin: -1px 0 0 auto; }
.star { width: 10.670px; height: 10.670px; color: #9aa2b0; }
.star.lit { color: #facc15; fill: #facc15; }
.about { margin-top: 4px; font-size: 9.330px; line-height: 14px; letter-spacing: -.250px; color: #bfc4cd; }
.meta { height: 14px; margin-top: 4px; font-size: 9.330px; letter-spacing: -.250px; color: #a3aab5; }
.meta-icon { width: 11px; height: 11px; margin-right: 2.500px; }
.meta b { margin-left: auto; font-weight: 700; letter-spacing: -.2px; }

.scrollbar { display: flex; flex-direction: column; align-items: center; width: 15px; height: 593px; background: #fcfcfc; }
.arrow-up { margin-top: 6px; border: 5px solid transparent; border-top: 0; border-bottom: 5px solid #858585; }
.thumb { width: 9px; height: 406px; margin-top: 7px; border-radius: 5px; background: #898989; }
.arrow-down { margin-top: 159px; border: 5px solid transparent; border-bottom: 0; border-top: 6px solid #858585; }
.particle { position: absolute; border-radius: 50%; background: #b8bdc8; z-index: 2; }
.particle.azure { background: #609fef; }
.particle.onlight { background: #6ea6ee; }

.taskbar { display: flex; height: 40px; background: #1e1e1e; color: #fff; z-index: 3; }
.start { display: grid; place-items: center; width: 48px; }
.search { display: flex; align-items: center; width: 288px; padding-left: 11px; border: 1px solid #bfbfbf; background: #f2f2f2; color: #222; }
.search span { margin: 1px 0 0 10px; font-size: 14.600px; letter-spacing: -.120px; color: #333; }
.travel { width: 66px; height: 38px; margin-left: auto; margin-right: 7px; }
.task-view { display: grid; place-items: center; width: 50px; color: #dedede; padding-right: 2px; }
.app { position: relative; display: grid; place-items: center; width: 50px; }
.app-icon { width: 24px; height: 24px; }
.explorer .app-icon { width: 22px; height: 19px; }
.vlc .app-icon { width: 21px; }
.profile .app-icon { width: 27px; height: 27px; margin: 1px 0 0 3px; }
.app.open::after { content: ""; position: absolute; left: 5px; right: 5px; bottom: 0; height: 2px; background: #76b9ed; }
.app.current { width: 49px; margin-left: 1px; background: #494949; }
.app.current::after { left: 0; right: 0; }
.tray { position: relative; display: flex; align-items: center; flex: 1; padding-left: 49px; color: #ddd; }
.weather { width: 26px; height: 26px; }
.temp { width: 40px; margin-left: 7px; padding-top: 1px; font-family: "Noto Sans", sans-serif; font-size: 14px; letter-spacing: -.4px; color: #fff; }
.t-up { width: 14px; height: 14px; margin-left: 18px; }
.t-screen { width: 18px; height: 18px; margin-left: 17px; }
.t-camera { width: 16px; height: 16px; margin-left: 15px; }
.t-wifi { width: 16px; height: 16px; margin-left: 16px; }
.t-mute { width: 16px; height: 16px; margin-left: 15px; }
.t-keyboard { width: 22px; height: 14px; margin-left: 17px; }
.t-touchpad { width: 14px; height: 12px; margin-left: 22px; }
.clock { display: flex; flex-direction: column; align-items: center; width: 62px; margin: 1px 0 0 17px; font-size: 12.200px; line-height: 18px; letter-spacing: -.4px; color: #fff; }
.date { letter-spacing: -.25px; }
.notes { position: relative; width: 27px; height: 26px; margin-left: 15px; }
.notes-icon { width: 26px; height: 26px; margin-top: 1px; }
.count { position: absolute; left: 9px; top: 11px; width: 15px; font-size: 10.500px; font-weight: 600; line-height: 15px; text-align: center; color: #fff; }
.peek { position: absolute; right: 4px; top: 0; width: 1px; height: 40px; background: #6b6b6b; }
</style>
